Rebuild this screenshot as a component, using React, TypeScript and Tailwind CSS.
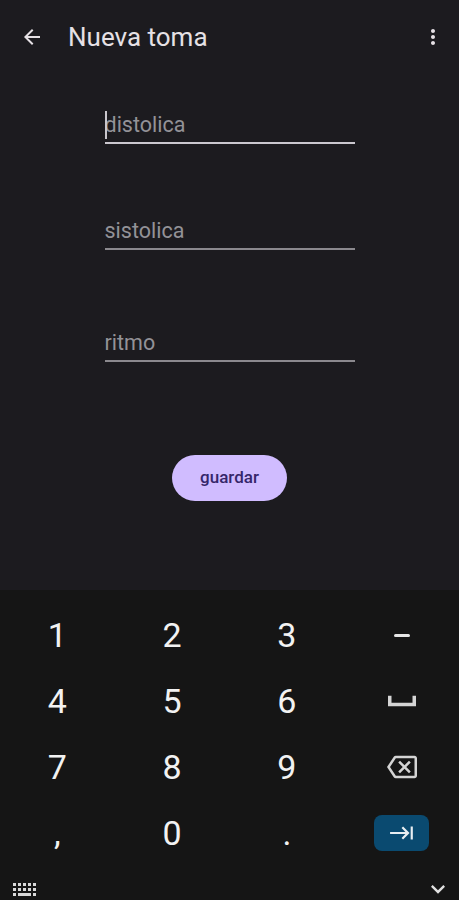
import React from 'react';

const font = { fontFamily: 'Roboto, "Noto Sans", sans-serif' };

const Field = ({ label, focused, className }: { label: string; focused?: boolean; className: string }) => {
  return (
    <div className={`relative mx-auto w-[250px] ${className}`}>
      <div className="flex items-end h-[29px] pb-[4px]">
        <span className="text-[21.5px] leading-[26px] text-[#939297]">{label}</span>
      </div>
      {focused && <div className="absolute left-0 top-[-2px] w-[2px] h-[28px] bg-[#c9c6cc]" />}
      <div className={`h-[2px] ${focused ? 'bg-[#cbc8cf]' : 'bg-[#8b898e]'}`} />
    </div>
  );
};

const Key = ({ children }: { children: React.ReactNode }) => (
  <div className="flex items-center justify-center h-[66px] text-[34px] text-[#f2f2f2]">{children}</div>
);

export default function App() {
  return (
    <div className="w-[459px] h-[900px] flex flex-col bg-[#1c1b1f] overflow-hidden" style={font}>
      <div className="h-[590px] flex flex-col">
        {/* App bar */}
        <div className="h-[74px] flex items-center px-[20px]">
          <svg viewBox="0 0 24 24" className="w-[24px] h-[24px] fill-[#e6e1e5]">
            <path d="M20 11H7.83l5.59-5.59L12 4l-8 8 8 8 1.41-1.41L7.83 13H20v-2z" />
          </svg>
          <span className="ml-[24px] text-[26px] text-[#e6e1e5]">Nueva toma</span>
          <div className="flex-1" />
          <svg viewBox="0 0 24 24" className="w-[24px] h-[24px] fill-[#e6e1e5] mr-[-6px]">
            <path d="M12 8c1.1 0 2-.9 2-2s-.9-2-2-2-2 .9-2 2 .9 2 2 2zm0 2c-1.1 0-2 .9-2 2s.9 2 2 2 2-.9 2-2-.9-2-2-2zm0 6c-1.1 0-2 .9-2 2s.9 2 2 2 2-.9 2-2-.9-2-2-2z" />
          </svg>
        </div>

        <Field label="distolica" focused className="mt-[39px]" />
        <Field label="sistolica" className="mt-[75px]" />
        <Field label="ritmo" className="mt-[81px]" />

        <button className="mx-auto mt-[93px] w-[115px] h-[46px] rounded-full bg-[#d0bcff] text-[17px] font-medium text-[#35266a]">
          guardar
        </button>
      </div>

      {/* Keyboard */}
      <div className="flex-1 bg-[#151515] flex flex-col pt-[12px]">
        <div className="grid grid-cols-4">
          <Key>1</Key>
          <Key>2</Key>
          <Key>3</Key>
          <Key>
            <div className="w-[16px] h-[3px] rounded-sm bg-[#e6e6e6]" />
          </Key>
          <Key>4</Key>
          <Key>5</Key>
          <Key>6</Key>
          <Key>
            <svg viewBox="4 8 16 8" className="w-[28px] h-[14px] fill-[#d4d4d4]">
              <path d="M18 9v4H6V9H4v6h16V9z" />
            </svg>
          </Key>
          <Key>7</Key>
          <Key>8</Key>
          <Key>9</Key>
          <Key>
            <svg viewBox="0 0 24 24" className="w-[30px] h-[30px] fill-[#d4d4d4]">
              <path d="M22 3H7c-.69 0-1.23.35-1.59.88L0 12l5.41 8.11c.36.53.9.89 1.59.89h15c1.1 0 2-.9 2-2V5c0-1.1-.9-2-2-2zm0 16H7.07L2.4 12l4.66-7H22v14zm-11.59-2L14 13.41 17.59 17 19 15.59 15.41 12 19 8.41 17.59 7 14 10.59 10.41 7 9 8.41 12.59 12 9 15.59z" />
            </svg>
          </Key>
          <Key>,</Key>
          <Key>0</Key>
          <Key>.</Key>
          <Key>
            <div className="w-[55px] h-[36px] rounded-[8px] bg-[#0a4a70] flex items-center justify-center">
              <svg viewBox="0 0 24 24" className="w-[26px] h-[26px] fill-[#e8eef2]">
                <path d="M11.59 7.41L15.17 11H1v2h14.17l-3.59 3.59L13 18l6-6-6-6-1.41 1.41zM20 6v12h2V6h-2z" />
              </svg>
            </div>
          </Key>
        </div>
        <div className="flex-1 flex items-end justify-between px-[13px] pb-[3px]">
          <svg viewBox="0 0 24 14" className="w-[24px] h-[14px] fill-[#d8d8d8]">
            <rect x="0" y="0" width="3" height="3" />
            <rect x="5" y="0" width="3" height="3" />
            <rect x="10" y="0" width="3" height="3" />
            <rect x="15" y="0" width="3" height="3" />
            <rect x="20" y="0" width="3" height="3" />
            <rect x="0" y="5" width="3" height="3" />
            <rect x="5" y="5" width="3" height="3" />
            <rect x="10" y="5" width="3" height="3" />
            <rect x="15" y="5" width="3" height="3" />
            <rect x="20" y="5" width="3" height="3" />
            <rect x="0" y="10" width="3" height="3" />
            <rect x="5" y="10" width="13" height="3" />
            <rect x="20" y="10" width="3" height="3" />
          </svg>
          <svg viewBox="0 0 24 24" className="w-[28px] h-[28px] fill-[#e0e0e0] mr-[-6px] mb-[-6px]">
            <path d="M16.59 8.59L12 13.17 7.41 8.59 6 10l6 6 6-6z" />
          </svg>
        </div>
      </div>
    </div>
  );
}
